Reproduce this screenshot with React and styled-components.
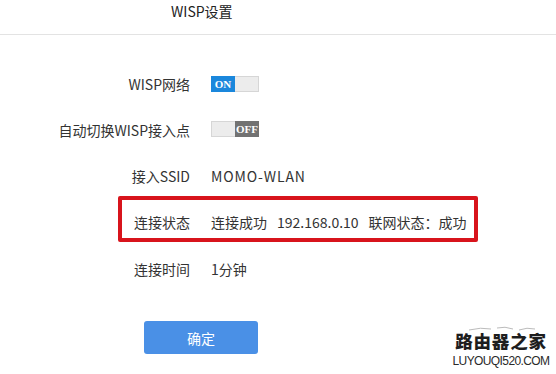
import React from "react";
import styled, { createGlobalStyle } from "styled-components";

const Global = createGlobalStyle`
  html, body { margin: 0; padding: 0; background: #fff; }
  body {
    font-family: "Noto Sans CJK SC", "Noto Sans", sans-serif;
    color: #333;
    width: 556px;
    height: 374px;
    overflow: hidden;
  }
`;

const Page = styled.div`
  position: relative;
  width: 556px;
  height: 374px;
  background: #fff;
`;

const Header = styled.div`
  height: 35px;
  border-bottom: 1px solid #e3e3e3;
  padding-left: 171px;
  box-sizing: border-box;
  font-size: 14px;
  line-height: 22px;
  color: #222;
`;

const Form = styled.div`
  display: flex;
  flex-direction: column;
  padding-top: 26px;
`;

const Row = styled.div`
  display: flex;
  align-items: center;
  height: 46px;
  box-sizing: border-box;
  font-size: 14px;
  ${(p) =>
    p.$highlight &&
    `
    margin: -3px 0 4px 118px;
    width: 360px;
    border: 4px solid #d8141c;
    border-radius: 2px;
    padding-top: 6px;
  `}
`;

const Label = styled.div`
  width: ${(p) => p.$width}px;
  text-align: right;
  margin-right: 21px;
  flex-shrink: 0;
  white-space: nowrap;
`;

const Value = styled.div`
  display: flex;
  gap: 10px;
  white-space: nowrap;
  letter-spacing: ${(p) => (p.$wide ? "0.9px" : "0")};
`;

const Toggle = styled.div`
  display: flex;
  width: 48px;
  height: 16px;
  box-sizing: border-box;
  border: 1px solid #d6d6d6;
  background: #ececec;
  justify-content: ${(p) => (p.$on ? "flex-start" : "flex-end")};
  margin-top: ${(p) => (p.$on ? "0" : "-2px")};
`;

const Knob = styled.div`
  width: 24px;
  height: 16px;
  margin: -1px;
  background: ${(p) => (p.$on ? "#1a87dc" : "#727272")};
  color: #fff;
  font-family: "Liberation Serif", "DejaVu Serif", serif;
  font-weight: bold;
  font-size: 11px;
  line-height: 16px;
  text-align: center;
`;

const ButtonWrap = styled.div`
  padding: 29px 0 0 144px;
`;

const Button = styled.button`
  width: 114px;
  height: 33px;
  border: none;
  border-radius: 3px;
  background: #4a90e6;
  color: #fff;
  font-family: "Noto Sans CJK SC", sans-serif;
  font-size: 14px;
  padding: 0;
`;

const Watermark = styled.div`
  position: absolute;
  right: 8px;
  bottom: 6px;
  width: 94px;
  display: flex;
  flex-direction: column;
  align-items: center;
  gap: 3px;
`;

const MarkTitle = styled.div`
  font-family: "Noto Sans CJK SC", sans-serif;
  font-weight: 900;
  font-size: 17.5px;
  line-height: 20px;
  letter-spacing: 0.8px;
  color: #1e1e1e;
`;

const MarkUrl = styled.div`
  font-family: "Liberation Sans", Arial, sans-serif;
  font-size: 12px;
  line-height: 14px;
  color: #2a2a2a;
  letter-spacing: -0.6px;
`;

const Deco = styled.svg`
  display: block;
  margin-bottom: -4px;
`;

export default function App() {
  return (
    <Page>
      <Global />
      <Header>WISP设置</Header>
      <Form>
        <Row>
          <Label $width={190}>WISP网络</Label>
          <Toggle $on>
            <Knob $on>ON</Knob>
          </Toggle>
        </Row>
        <Row>
          <Label $width={190}>自动切换WISP接入点</Label>
          <Toggle>
            <Knob>OFF</Knob>
          </Toggle>
        </Row>
        <Row>
          <Label $width={190}>接入SSID</Label>
          <Value $wide>MOMO-WLAN</Value>
        </Row>
        <Row $highlight>
          <Label $width={68}>连接状态</Label>
          <Value>
            <span>连接成功</span>
            <span>192.168.0.10</span>
            <span>联网状态：成功</span>
          </Value>
        </Row>
        <Row>
          <Label $width={190}>连接时间</Label>
          <Value>1分钟</Value>
        </Row>
      </Form>
      <ButtonWrap>
        <Button>确定</Button>
      </ButtonWrap>
      <Watermark>
        <Deco width="80" height="6" viewBox="0 0 80 6">
          <path d="M8 4 Q20 1 30 3 M36 2 Q44 0 52 3 M58 4 Q66 1 74 3" stroke="#bbb" strokeWidth="1" fill="none" />
        </Deco>
        <MarkTitle>路由器之家</MarkTitle>
        <MarkUrl>LUYOUQI520.COM</MarkUrl>
      </Watermark>
    </Page>
  );
}
